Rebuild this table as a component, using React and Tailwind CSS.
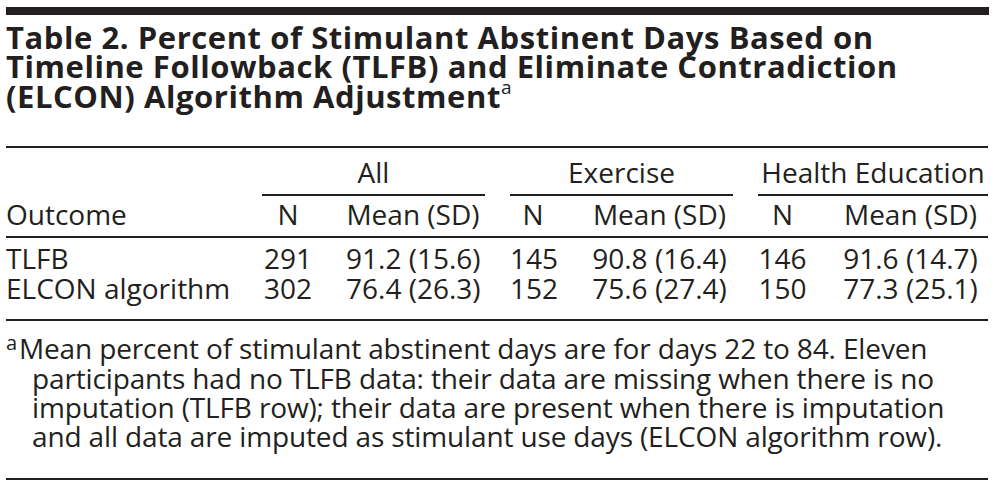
const rows = [
  { outcome: "TLFB", all: ["291", "91.2 (15.6)"], ex: ["145", "90.8 (16.4)"], he: ["146", "91.6 (14.7)"] },
  { outcome: "ELCON algorithm", all: ["302", "76.4 (26.3)"], ex: ["152", "75.6 (27.4)"], he: ["150", "77.3 (25.1)"] },
];

export default function App() {
  return (
    <div
      className="w-[995px] h-[483px] bg-white px-[6px] pt-[7px] text-[#231f20]"
      style={{ fontFamily: '"Open Sans", "Noto Sans", sans-serif' }}
    >
      {/* heavy top rule */}
      <div className="h-[8px] w-[983px] bg-[#231f20]" />

      {/* title */}
      <h1 className="mt-[8px] text-[31px] leading-[29px] font-bold tracking-[0.018em]">
        Table 2. Percent of Stimulant Abstinent Days Based on
        <br />
        Timeline Followback (TLFB) and Eliminate Contradiction
        <br />
        (ELCON) Algorithm Adjustment
        <sup className="relative -top-[3px] text-[19px] font-normal tracking-normal align-super leading-none">a</sup>
      </h1>

      <table className="mt-[35px] w-[982px] table-fixed border-collapse border-t-2 border-[#231f20] text-[28px] leading-[30px]">
        <colgroup>
          <col className="w-[256px]" />
          <col className="w-[52px]" />
          <col className="w-[171px]" />
          <col className="w-[25px]" />
          <col className="w-[46px]" />
          <col className="w-[177px]" />
          <col className="w-[25px]" />
          <col className="w-[49px]" />
          <col className="w-[181px]" />
        </colgroup>
        <thead>
          <tr>
            <th className="pt-[9px] pb-[7px]" />
            <th colSpan={2} className="pt-[9px] pb-[7px] text-center font-normal border-b-2 border-[#231f20]">All</th>
            <th />
            <th colSpan={2} className="pt-[9px] pb-[7px] text-center font-normal border-b-2 border-[#231f20]">Exercise</th>
            <th />
            <th colSpan={2} className="pt-[9px] pb-[7px] text-center font-normal border-b-2 border-[#231f20]">Health Education</th>
          </tr>
          <tr className="border-b-2 border-[#231f20]">
            <th className="pt-[3px] pb-[7px] text-left font-normal">Outcome</th>
            <th className="pt-[3px] pb-[7px] text-center font-normal">N</th>
            <th className="pt-[3px] pb-[7px] pl-[32px] pr-[5px] text-center font-normal">Mean (SD)</th>
            <th />
            <th className="pt-[3px] pb-[7px] text-center font-normal">N</th>
            <th className="pt-[3px] pb-[7px] pl-[36px] pr-[6px] text-center font-normal">Mean (SD)</th>
            <th />
            <th className="pt-[3px] pb-[7px] text-center font-normal">N</th>
            <th className="pt-[3px] pb-[7px] pl-[36px] pr-[10px] text-center font-normal">Mean (SD)</th>
          </tr>
        </thead>
        <tbody className="border-b-2 border-[#231f20]">
          {rows.map((r, i) => {
            const pad = i === 0 ? "pt-[5px]" : "pb-[16px]";
            return (
              <tr key={r.outcome}>
                <td className={`${pad} text-left whitespace-nowrap`}>{r.outcome}</td>
                <td className={`${pad} text-center`}>{r.all[0]}</td>
                <td className={`${pad} pl-[32px] pr-[5px] text-center whitespace-nowrap`}>{r.all[1]}</td>
                <td className={pad} />
                <td className={`${pad} text-center`}>{r.ex[0]}</td>
                <td className={`${pad} pl-[36px] pr-[6px] text-center whitespace-nowrap`}>{r.ex[1]}</td>
                <td className={pad} />
                <td className={`${pad} text-center`}>{r.he[0]}</td>
                <td className={`${pad} pl-[36px] pr-[10px] text-center whitespace-nowrap`}>{r.he[1]}</td>
              </tr>
            );
          })}
        </tbody>
      </table>

      {/* footnote */}
      <div className="w-[982px] border-b-2 border-[#231f20] pt-[11px] pb-[27px] pl-[26px] text-[28px] leading-[29px] tracking-[-0.005em]">
        <p className="-indent-[26px]">
          <sup className="relative top-[1px] mr-[2px] text-[20px] align-super leading-none">a</sup>
          Mean percent of stimulant abstinent days are for days 22 to 84. Eleven
          <br />
          participants had no TLFB data: their data are missing when there is no
          <br />
          imputation (TLFB row); their data are present when there is imputation
          <br />
          and all data are imputed as stimulant use days (ELCON algorithm row).
        </p>
      </div>
    </div>
  );
}
